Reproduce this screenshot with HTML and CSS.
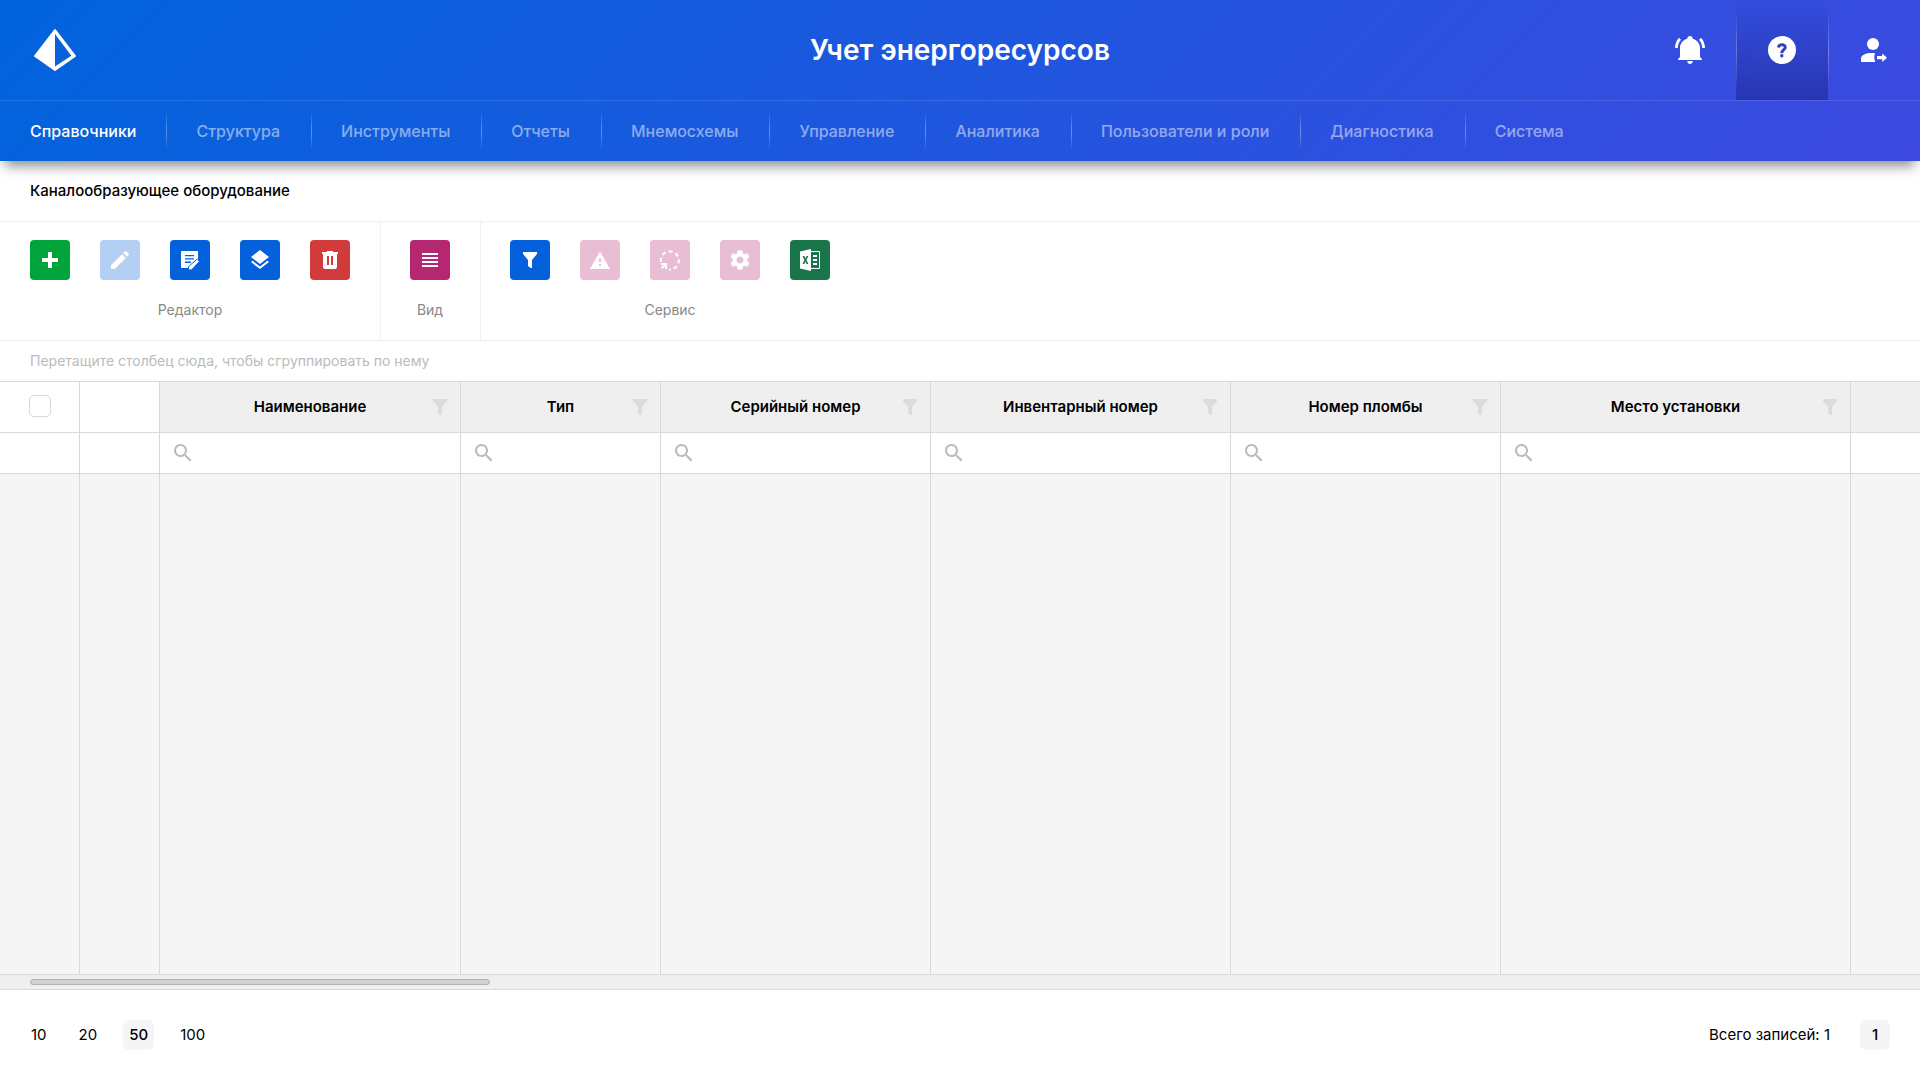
FILE: index.html
```html
<!DOCTYPE html>
<html lang="ru">
<head>
<meta charset="utf-8">
<meta name="viewport" content="width=device-width, initial-scale=1">
<title>Учет энергоресурсов</title>
<link rel="stylesheet" href="styles.css">
</head>
<body>
<svg class="sprite" aria-hidden="true">
  <symbol id="i-filter" viewBox="0 0 24 24"><path d="M5 4h14v2l-5 6v8h-1.500L10 18v-6L5 6z"/></symbol>
  <symbol id="i-search" viewBox="0 0 24 24"><path d="M15.5 14h-.79l-.28-.27C15.41 12.59 16 11.11 16 9.500 16 5.910 13.090 3 9.500 3S3 5.910 3 9.500 5.910 16 9.500 16c1.610 0 3.090-.59 4.230-1.570l.27.28v.79l5 4.990L20.490 19l-4.990-5zm-6 0C7.010 14 5 11.990 5 9.500S7.010 5 9.500 5 14 7.010 14 9.500 11.990 14 9.500 14z"/></symbol>
</svg>
<div class="page">
  <header class="header">
    <div class="topbar">
      <a class="logo" href="#" aria-label="Главная">
        <svg width="44" height="44" viewBox="0 0 44 44"><path fill="#fff" stroke="#fff" stroke-width="2" stroke-linejoin="round" d="M22 2 42 28 22 42 2 28z"/><path fill="#0762dc" d="M22 6 38.300 27.700 22 38.500z"/></svg>
      </a>
      <h1 class="title">Учет энергоресурсов</h1>
      <div class="actions">
        <button class="action" aria-label="Уведомления">
          <svg width="30" height="28" viewBox="0 0 30 28"><path fill="#fff" d="M3 24v-1l2-2V12C5 7.500 8 4 12.300 2.800 12.300 1 13.400 0 15 0s2.700 1 2.700 2.800C22 4 25 7.500 25 12v9l2 2v1zM12.300 25h5.400c0 2-1.200 3-2.700 3s-2.700-1-2.700-3z"/><path fill="none" stroke="#fff" stroke-width="2.800" d="M1.400 12C1.500 8 2.700 5.200 5 2.700M28.600 12C28.500 8 27.300 5.200 25 2.700"/></svg>
        </button>
        <button class="action action-active" aria-label="Справка">
          <svg width="28" height="28" viewBox="0 0 28 28"><circle cx="14" cy="14" r="14" fill="#fff"/><path fill="none" stroke="#2f3fc6" stroke-width="3" d="M10.400 11.500C10.800 8 17.300 7.800 17.200 11.400 17.200 13.800 13.800 13.600 13.800 17.200"/><circle cx="13.800" cy="19.700" r="1.700" fill="#2f3fc6"/></svg>
        </button>
        <button class="action" aria-label="Выход">
          <svg width="26" height="24" viewBox="0 0 26 24"><g fill="#fff"><circle cx="12" cy="6" r="6"/><path d="M0 24v-3.500C0 17 5 15 11 15c1 0 2 0 3 .2-1 3-1 5.800.3 8.800zM16 18h5.200v-2.600L26 19.700 21.200 24v-2.700H16z"/></g></svg>
        </button>
      </div>
    </div>
    <nav class="nav" aria-label="Разделы">
      <a class="nav-link nav-current" href="#">Справочники</a>
      <a class="nav-link" href="#">Структура</a>
      <a class="nav-link" href="#">Инструменты</a>
      <a class="nav-link" href="#">Отчеты</a>
      <a class="nav-link" href="#">Мнемосхемы</a>
      <a class="nav-link" href="#">Управление</a>
      <a class="nav-link" href="#">Аналитика</a>
      <a class="nav-link" href="#">Пользователи и роли</a>
      <a class="nav-link" href="#">Диагностика</a>
      <a class="nav-link" href="#">Система</a>
    </nav>
  </header>

  <main class="main">
    <h2 class="heading">Каналообразующее оборудование</h2>

    <div class="toolbar">
      <section class="group">
        <div class="tools">
          <button class="tool green" aria-label="Добавить"><svg viewBox="0 0 24 24"><path d="M4 10h6V4h4v6h6v4h-6v6h-4v-6H4z"/></svg></button>
          <button class="tool blue" aria-label="Изменить" disabled><svg viewBox="0 0 24 24"><path d="M3 17.250V21h3.750L17.810 9.940l-3.750-3.750L3 17.250zM20.710 7.040a1 1 0 0 0 0-1.410l-2.340-2.340a1 1 0 0 0-1.410 0l-1.830 1.830 3.750 3.750 1.830-1.830z"/></svg></button>
          <button class="tool blue" aria-label="Изменить запись"><svg viewBox="0 0 24 24"><path fill-rule="evenodd" d="M4 3h15q1 0 1 1v7l-9 9H4q-1 0-1-1V4q0-1 1-1zM7 7v1.300h9V7zM7 10.300v1.300h9v-1.300zM7 13.600v1.300h6v-1.300z"/><path stroke="#0461db" stroke-width="1" d="m10.500 18.500 8.200-7q.5-.5 1 0l1.400 1.400q.5.500 0 1l-7.600 8H10.500z"/></svg></button>
          <button class="tool blue" aria-label="Слои"><svg viewBox="0 0 24 24"><path d="M12 16l7.360-5.730L21 9l-9-7-9 7 1.630 1.270zM12 18.540l-7.380-5.730L3 14.070l9 7 9-7-1.630-1.270z"/></svg></button>
          <button class="tool red" aria-label="Удалить"><svg viewBox="0 0 24 24"><path fill-rule="evenodd" d="M4 4h5V3h6v1h5v2h-1v13q0 2-2 2H7q-2 0-2-2V6H4zM9 8v9h2V8zM13 8v9h2V8z"/></svg></button>
        </div>
        <p class="group-name">Редактор</p>
      </section>
      <section class="group">
        <div class="tools">
          <button class="tool magenta" aria-label="Вид строк"><svg viewBox="0 0 24 24"><path d="M4 5h16v2H4zM4 9h16v2H4zM4 13h16v2H4zM4 17h16v2H4z"/></svg></button>
        </div>
        <p class="group-name">Вид</p>
      </section>
      <section class="group">
        <div class="tools">
          <button class="tool blue" aria-label="Фильтр"><svg><use href="#i-filter"/></svg></button>
          <button class="tool magenta" aria-label="Аварии" disabled><svg viewBox="0 0 24 24"><path fill-rule="evenodd" d="M12 3.500 22 21H2zM11 10v4h2v-4zM11 16v2h2v-2z"/></svg></button>
          <button class="tool magenta" aria-label="Опрос" disabled><svg viewBox="0 0 24 24"><path fill="none" stroke="#fff" stroke-width="2" stroke-dasharray="4 3.100" d="M2.900 13.800a9 9 0 1 1 8 7.600"/><path d="M3 15h6v6H7v-2.600L4.400 21 3 19.600 5.600 17H3z"/></svg></button>
          <button class="tool magenta" aria-label="Настройки" disabled><svg viewBox="0 0 24 24"><path d="M19.140 12.940c.04-.3.06-.61.06-.94 0-.32-.02-.64-.07-.94l2.030-1.580c.18-.14.23-.41.12-.61l-1.920-3.320c-.12-.22-.37-.29-.59-.22l-2.390.96c-.5-.38-1.030-.7-1.620-.94l-.36-2.540c-.04-.24-.24-.41-.48-.41h-3.840c-.24 0-.43.17-.47.41l-.36 2.540c-.59.24-1.130.57-1.620.94l-2.390-.96c-.22-.08-.47 0-.59.22L2.740 8.870c-.12.21-.08.47.12.61l2.030 1.580c-.05.3-.09.63-.09.94s.02.64.07.94l-2.030 1.580c-.18.14-.23.41-.12.61l1.920 3.320c.12.22.37.29.59.22l2.390-.96c.5.38 1.030.7 1.620.94l.36 2.540c.05.24.24.41.48.41h3.840c.24 0 .44-.17.47-.41l.36-2.540c.59-.24 1.130-.56 1.620-.94l2.390.96c.22.08.47 0 .59-.22l1.920-3.320c.12-.22.07-.47-.12-.61zM12 15.600c-1.980 0-3.600-1.620-3.600-3.600s1.620-3.600 3.600-3.600 3.600 1.620 3.600 3.600-1.620 3.600-3.600 3.600z"/></svg></button>
          <button class="tool excel" aria-label="Экспорт в Excel"><svg viewBox="0 0 24 24"><path fill-rule="evenodd" d="M2 3.500 13 1v22L2 20.500zM4.500 8l1.900 4-1.900 4h1.800l1.100-2.500L8.500 16h1.900l-2-4 2-4H8.600l-1.100 2.400L6.400 8z"/><path fill="none" stroke="#fff" stroke-width="1" d="M13 3.500h8.500v17H13"/><path d="M15 7h4v2h-4zM15 11h4v2h-4zM15 15h4v2h-4z"/></svg></button>
        </div>
        <p class="group-name">Сервис</p>
      </section>
    </div>

    <p class="group-hint">Перетащите столбец сюда, чтобы сгруппировать по нему</p>

    <div class="grid">
      <table class="table">
        <colgroup>
          <col class="w-80"><col class="w-80"><col class="w-301"><col class="w-200"><col class="w-270"><col class="w-300"><col class="w-270"><col class="w-350"><col>
        </colgroup>
        <thead>
          <tr class="head-row">
            <td class="check-cell"><input class="check" type="checkbox" aria-label="Выбрать все"></td>
            <td></td>
            <th scope="col"><div class="head"><span>Наименование</span><button class="head-filter" aria-label="Фильтр: Наименование"><svg><use href="#i-filter"/></svg></button></div></th>
            <th scope="col"><div class="head"><span>Тип</span><button class="head-filter" aria-label="Фильтр: Тип"><svg><use href="#i-filter"/></svg></button></div></th>
            <th scope="col"><div class="head"><span>Серийный номер</span><button class="head-filter" aria-label="Фильтр: Серийный номер"><svg><use href="#i-filter"/></svg></button></div></th>
            <th scope="col"><div class="head"><span>Инвентарный номер</span><button class="head-filter" aria-label="Фильтр: Инвентарный номер"><svg><use href="#i-filter"/></svg></button></div></th>
            <th scope="col"><div class="head"><span>Номер пломбы</span><button class="head-filter" aria-label="Фильтр: Номер пломбы"><svg><use href="#i-filter"/></svg></button></div></th>
            <th scope="col"><div class="head"><span>Место установки</span><button class="head-filter" aria-label="Фильтр: Место установки"><svg><use href="#i-filter"/></svg></button></div></th>
            <th></th>
          </tr>
          <tr class="search-row">
            <td></td>
            <td></td>
            <td><label class="search"><svg><use href="#i-search"/></svg><input type="text" aria-label="Поиск: Наименование"></label></td>
            <td><label class="search"><svg><use href="#i-search"/></svg><input type="text" aria-label="Поиск: Тип"></label></td>
            <td><label class="search"><svg><use href="#i-search"/></svg><input type="text" aria-label="Поиск: Серийный номер"></label></td>
            <td><label class="search"><svg><use href="#i-search"/></svg><input type="text" aria-label="Поиск: Инвентарный номер"></label></td>
            <td><label class="search"><svg><use href="#i-search"/></svg><input type="text" aria-label="Поиск: Номер пломбы"></label></td>
            <td><label class="search"><svg><use href="#i-search"/></svg><input type="text" aria-label="Поиск: Место установки"></label></td>
            <td></td>
          </tr>
        </thead>
        <tbody>
          <tr class="empty-row"><td></td><td></td><td></td><td></td><td></td><td></td><td></td><td></td><td></td></tr>
        </tbody>
      </table>
    </div>
    <div class="scroll"><div class="thumb"></div></div>
  </main>

  <footer class="footer">
    <div class="sizes">
      <button class="page-btn">10</button>
      <button class="page-btn">20</button>
      <button class="page-btn page-current">50</button>
      <button class="page-btn">100</button>
    </div>
    <div class="total">
      <span>Всего записей: 1</span>
      <button class="page-btn page-current">1</button>
    </div>
  </footer>
</div>
</body>
</html>
```
FILE: styles.css
```css
* {
  box-sizing: border-box;
}

body {
  margin: 0;
  font-family: Inter, "Liberation Sans", sans-serif;
  font-size: 15px;
  color: #000;
  background: #fff;
}

button {
  margin: 0;
  padding: 0;
  border: 0;
  background: none;
  font: inherit;
  color: inherit;
}

svg {
  display: block;
}

.sprite {
  display: none;
}

.page {
  display: flex;
  flex-direction: column;
  min-height: 100vh;
}

/* Header */

.header {
  position: relative;
  color: #fff;
  background: linear-gradient(135deg, #0064dc, #3d49e0);
  box-shadow: 0 10px 12px -5px rgba(0, 0, 0, 0.45);
}

.topbar {
  display: grid;
  grid-template-columns: 1fr auto 1fr;
  align-items: center;
  height: 101px;
  border-bottom: 1px solid rgba(255, 255, 255, 0.13);
}

.logo {
  justify-self: start;
  margin-left: 33px;
}

.title {
  margin: 0;
  font-size: 28px;
  line-height: 40px;
  font-weight: 600;
}

.actions {
  display: flex;
  justify-self: end;
  height: 100px;
}

.action {
  display: flex;
  align-items: center;
  justify-content: center;
  width: 92px;
}

.action-active {
  background:
    linear-gradient(transparent 10%, rgba(255, 255, 255, 0.3) 50%, transparent 90%) left / 1px 100% no-repeat,
    linear-gradient(transparent, rgba(28, 40, 150, 0.6));
}

.action-active + .action {
  background: linear-gradient(transparent 10%, rgba(255, 255, 255, 0.3) 50%, transparent 90%) left / 1px 100% no-repeat;
}

.nav {
  display: flex;
  height: 60px;
}

.nav-link {
  display: flex;
  align-items: center;
  padding: 0 31px 0 30px;
  font-size: 16px;
  font-weight: 500;
  color: rgba(255, 255, 255, 0.5);
  text-decoration: none;
  white-space: nowrap;
}

.nav-link + .nav-link {
  background: linear-gradient(transparent, rgba(255, 255, 255, 0.35), transparent) left / 1px 40px no-repeat;
}

.nav-link.nav-current {
  padding-right: 30px;
  color: #fff;
}

/* Main area */

.main {
  display: flex;
  flex: 1;
  flex-direction: column;
}

.heading {
  margin: 0;
  padding: 0 30px;
  font-size: 15px;
  line-height: 60px;
  font-weight: 500;
}

.toolbar {
  display: flex;
  border: solid #f0f0f0;
  border-width: 1px 0;
}

.group {
  padding: 18px 30px 20px;
}

.group + .group {
  box-shadow: inset 1px 0 #f0f0f0;
}

.tools {
  display: flex;
  gap: 30px;
}

.group-name {
  margin: 20px 0 0;
  font-size: 14px;
  line-height: 20px;
  text-align: center;
  color: #888;
}

.tool {
  display: flex;
  align-items: center;
  justify-content: center;
  width: 40px;
  height: 40px;
  border-radius: 4px;
}

.tool svg {
  width: 24px;
  height: 24px;
  fill: #fff;
}

.green { background: #00a43a; }
.blue { background: #0461db; }
.red { background: #d23b3c; }
.magenta { background: #b52771; }
.excel { background: #1b754b; }
.blue:disabled { background: #b4cff4; }
.magenta:disabled { background: #e9bed5; }

.group-hint {
  margin: 0;
  padding: 0 30px;
  font-size: 14px;
  line-height: 40px;
  color: #bbb;
}

/* Data grid */

.grid {
  display: flex;
  flex: 1;
  overflow: hidden;
  border-top: 1px solid #d9d9d9;
}

.table {
  width: 100%;
  min-width: 1920px;
  table-layout: fixed;
  border-spacing: 0;
}

.w-80 { width: 80px; }
.w-200 { width: 200px; }
.w-270 { width: 270px; }
.w-300 { width: 300px; }
.w-301 { width: 301px; }
.w-350 { width: 350px; }

.table th,
.table td {
  padding: 0;
  border: solid #d9d9d9;
  border-width: 0 1px 1px 0;
}

.table th:last-child,
.table td:last-child {
  border-right: 0;
}

.table th {
  background: #efefef;
}

.table .check-cell {
  padding-bottom: 2px;
}

.head-row {
  height: 51px;
}

.search-row {
  height: 41px;
}

.empty-row {
  background: #f5f5f5;
}

.head {
  display: grid;
  grid-template-columns: 24px 1fr 24px;
  align-items: center;
  padding: 0 8px;
  font-size: 15px;
  font-weight: 600;
}

.head span {
  grid-column: 2;
  padding-bottom: 2px;
}

.head svg {
  width: 24px;
  height: 24px;
  fill: #dcdcdc;
}

.check {
  display: block;
  width: 22px;
  height: 22px;
  margin: 0 auto;
  appearance: none;
  border: 1px solid #d9d9d9;
  border-radius: 5px;
  background: #fff;
}

.search {
  display: flex;
  gap: 8px;
  padding: 0 11px;
}

.search svg {
  flex: none;
  width: 24px;
  height: 24px;
  fill: #bbb;
}

.search input {
  flex: 1;
  min-width: 0;
  padding: 0;
  border: 0;
  outline: 0;
  font: inherit;
  background: none;
}

.scroll {
  padding: 4px 30px;
  background: #efefef;
  border-bottom: 1px solid #d9d9d9;
}

.thumb {
  width: 460px;
  height: 6px;
  border: 1px solid #b2b4b2;
  border-radius: 3px;
  background: #d1d3d1;
}

/* Footer */

.footer {
  display: flex;
  align-items: center;
  justify-content: space-between;
  padding: 30px 30px 30px 25px;
}

.sizes,
.total {
  display: flex;
  gap: 20px;
  line-height: 30px;
}

.total {
  gap: 30px;
}

.page-btn {
  height: 30px;
  padding: 0 6px;
  border-radius: 6px;
}

.total .page-btn {
  min-width: 30px;
}

.page-current {
  font-weight: 500;
  background: #f5f5f5;
}
```
